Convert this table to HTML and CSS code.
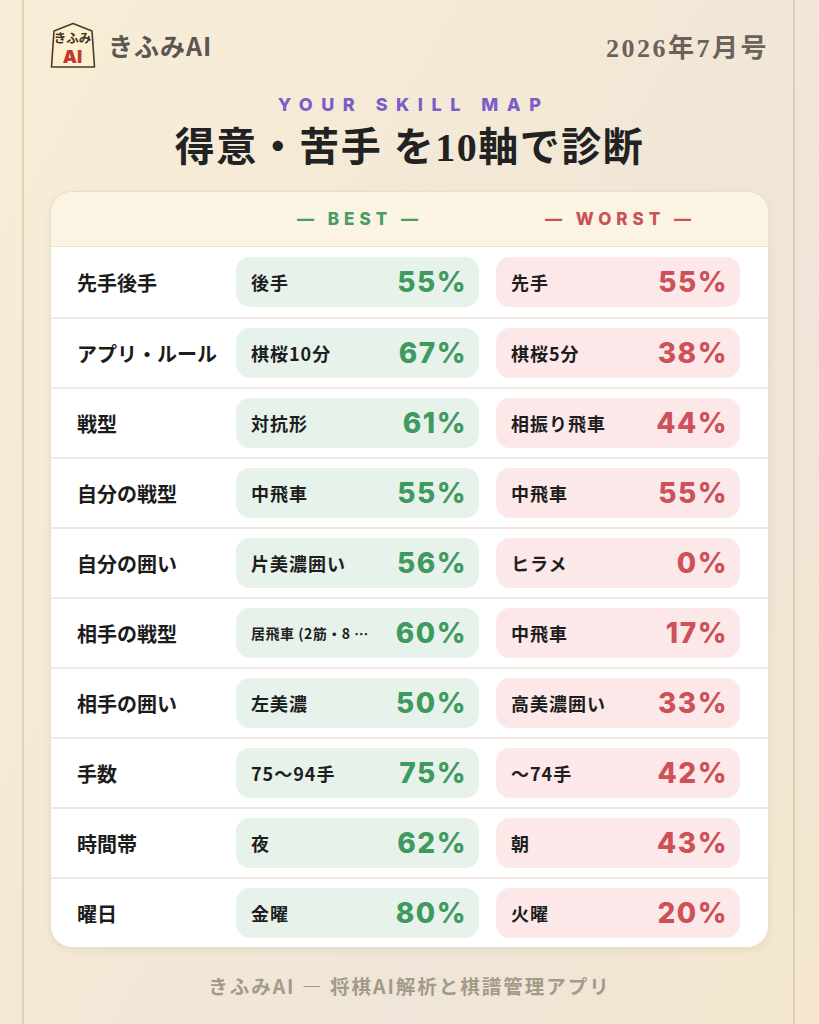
FILE: index.html
```html
<!DOCTYPE html>
<html lang="ja">
<head>
<meta charset="utf-8">
<link rel="stylesheet" href="styles.css">
</head>
<body>
<div class="frame">
  <header class="top">
    <div class="brand">
      <svg class="logo" viewBox="0 0 46 46" width="46" height="46">
        <polygon points="23,1.5 4,9 1.5,45 44.5,45 42,9" fill="#fdf0d0" stroke="#4a3a2c" stroke-width="1.6" stroke-linejoin="round"/>
        <text x="22.5" y="21" text-anchor="middle" font-size="12.5" font-weight="700" fill="#3c2e24" font-family="Noto Sans CJK JP, sans-serif">きふみ</text>
        <text x="22.5" y="41" text-anchor="middle" font-size="18" font-weight="900" fill="#c23a2e" font-family="Inter, sans-serif">AI</text>
      </svg>
      <span class="brand-name">きふみAI</span>
    </div>
    <div class="issue">2026年7月号</div>
  </header>

  <div class="eyebrow">YOUR SKILL MAP</div>
  <h1 class="title">得意・苦手 を10軸で診断</h1>

  <section class="card">
    <div class="card-head">
      <div></div>
      <div class="head best">— BEST —</div>
      <div class="head worst">— WORST —</div>
    </div>

    <div class="row">
      <div class="label">先手後手</div>
      <div class="pill best"><span class="name">後手</span><span class="pct">55%</span></div>
      <div class="pill worst"><span class="name">先手</span><span class="pct">55%</span></div>
    </div>
    <div class="row">
      <div class="label">アプリ・ルール</div>
      <div class="pill best"><span class="name">棋桜10分</span><span class="pct">67%</span></div>
      <div class="pill worst"><span class="name">棋桜5分</span><span class="pct">38%</span></div>
    </div>
    <div class="row">
      <div class="label">戦型</div>
      <div class="pill best"><span class="name">対抗形</span><span class="pct">61%</span></div>
      <div class="pill worst"><span class="name">相振り飛車</span><span class="pct">44%</span></div>
    </div>
    <div class="row">
      <div class="label">自分の戦型</div>
      <div class="pill best"><span class="name">中飛車</span><span class="pct">55%</span></div>
      <div class="pill worst"><span class="name">中飛車</span><span class="pct">55%</span></div>
    </div>
    <div class="row">
      <div class="label">自分の囲い</div>
      <div class="pill best"><span class="name">片美濃囲い</span><span class="pct">56%</span></div>
      <div class="pill worst"><span class="name">ヒラメ</span><span class="pct">0%</span></div>
    </div>
    <div class="row">
      <div class="label">相手の戦型</div>
      <div class="pill best"><span class="name small">居飛車 (2筋・8 …</span><span class="pct">60%</span></div>
      <div class="pill worst"><span class="name">中飛車</span><span class="pct">17%</span></div>
    </div>
    <div class="row">
      <div class="label">相手の囲い</div>
      <div class="pill best"><span class="name">左美濃</span><span class="pct">50%</span></div>
      <div class="pill worst"><span class="name">高美濃囲い</span><span class="pct">33%</span></div>
    </div>
    <div class="row">
      <div class="label">手数</div>
      <div class="pill best"><span class="name">75～94手</span><span class="pct">75%</span></div>
      <div class="pill worst"><span class="name">～74手</span><span class="pct">42%</span></div>
    </div>
    <div class="row">
      <div class="label">時間帯</div>
      <div class="pill best"><span class="name">夜</span><span class="pct">62%</span></div>
      <div class="pill worst"><span class="name">朝</span><span class="pct">43%</span></div>
    </div>
    <div class="row">
      <div class="label">曜日</div>
      <div class="pill best"><span class="name">金曜</span><span class="pct">80%</span></div>
      <div class="pill worst"><span class="name">火曜</span><span class="pct">20%</span></div>
    </div>
  </section>

  <footer class="foot">きふみAI — 将棋AI解析と棋譜管理アプリ</footer>
</div>
</body>
</html>
```

FILE: styles.css
```css
* { box-sizing: border-box; }
html, body {
  margin: 0;
  padding: 0;
  width: 819px;
  height: 1024px;
  overflow: hidden;
}
body {
  background: linear-gradient(120deg, #f8eed7 0%, #f3e8d6 45%, #efe5d8 70%, #f4e7cd 100%);
  font-family: "Noto Sans CJK JP", "Noto Sans", sans-serif;
  color: #1c1c1c;
}
.frame {
  margin: 0 24px 0 22px;
  height: 1024px;
  border-left: 2px solid rgba(196, 178, 150, 0.45);
  border-right: 2px solid rgba(196, 178, 150, 0.45);
  padding: 22px 24px 0 26px;
}
.top {
  display: flex;
  justify-content: space-between;
  align-items: center;
  height: 46px;
}
.brand {
  display: flex;
  align-items: center;
  gap: 12px;
}
.logo { display: block; }
.brand-name {
  font-size: 25px;
  font-weight: 700;
  color: #5b5651;
  letter-spacing: 1px;
}
.issue {
  font-family: "Liberation Serif", "Noto Sans CJK JP", serif;
  font-size: 26px;
  font-weight: 700;
  color: #6b6259;
  letter-spacing: 2.5px;
}
.eyebrow {
  margin-top: 26px;
  text-align: center;
  font-family: Inter, sans-serif;
  font-weight: 800;
  font-size: 18px;
  line-height: 22px;
  letter-spacing: 8.5px;
  color: #7b5ec6;
  padding-left: 8px;
}
.title {
  margin: 9px 0 0;
  text-align: center;
  font-family: "Liberation Serif", "Noto Sans CJK JP", serif;
  font-size: 40px;
  line-height: 46px;
  font-weight: 700;
  color: #222;
  letter-spacing: 1.5px;
}
.card {
  margin-top: 20px;
  background: #fff;
  border: 1.5px solid #eadfc8;
  border-radius: 22px;
  overflow: hidden;
  box-shadow: 0 2px 6px rgba(160, 130, 90, 0.12);
}
.card-head {
  display: grid;
  grid-template-columns: 168px 243px 244px;
  column-gap: 17px;
  height: 55px;
  align-items: center;
  background: #fbf4e3;
  border-bottom: 1.5px solid #ece2cf;
}
.head {
  text-align: center;
  font-family: Inter, sans-serif;
  font-weight: 800;
  font-size: 17px;
  letter-spacing: 5px;
  padding-left: 5px;
}
.head.best { color: #4a9c64; }
.head.worst { color: #c9525a; }
.row {
  display: grid;
  grid-template-columns: 168px 243px 244px;
  column-gap: 17px;
  align-items: center;
  height: 70px;
}
.row + .row { border-top: 2px solid #f0e9dd; }
.label {
  padding-left: 26px;
  font-size: 20px;
  font-weight: 700;
  color: #1c1c1c;
  white-space: nowrap;
}
.pill {
  height: 50px;
  border-radius: 14px;
  display: flex;
  align-items: center;
  justify-content: space-between;
  padding: 0 12px 0 15px;
}
.pill.best { background: #e7f2ea; }
.pill.worst { background: #fce8e9; }
.name {
  font-size: 18px;
  font-weight: 700;
  color: #1e1e1e;
  letter-spacing: 1px;
  white-space: nowrap;
}
.name.small { font-size: 14px; letter-spacing: 0.5px; }
.pct {
  font-family: Inter, sans-serif;
  font-size: 28px;
  font-weight: 800;
  letter-spacing: 1.5px;
}
.pill.best .pct { color: #3f9a5f; }
.pill.worst .pct { color: #cd5158; }
.foot {
  margin-top: 26px;
  text-align: center;
  font-size: 19.5px;
  line-height: 24px;
  font-weight: 700;
  color: #a39a8a;
  letter-spacing: 2px;
}
```
